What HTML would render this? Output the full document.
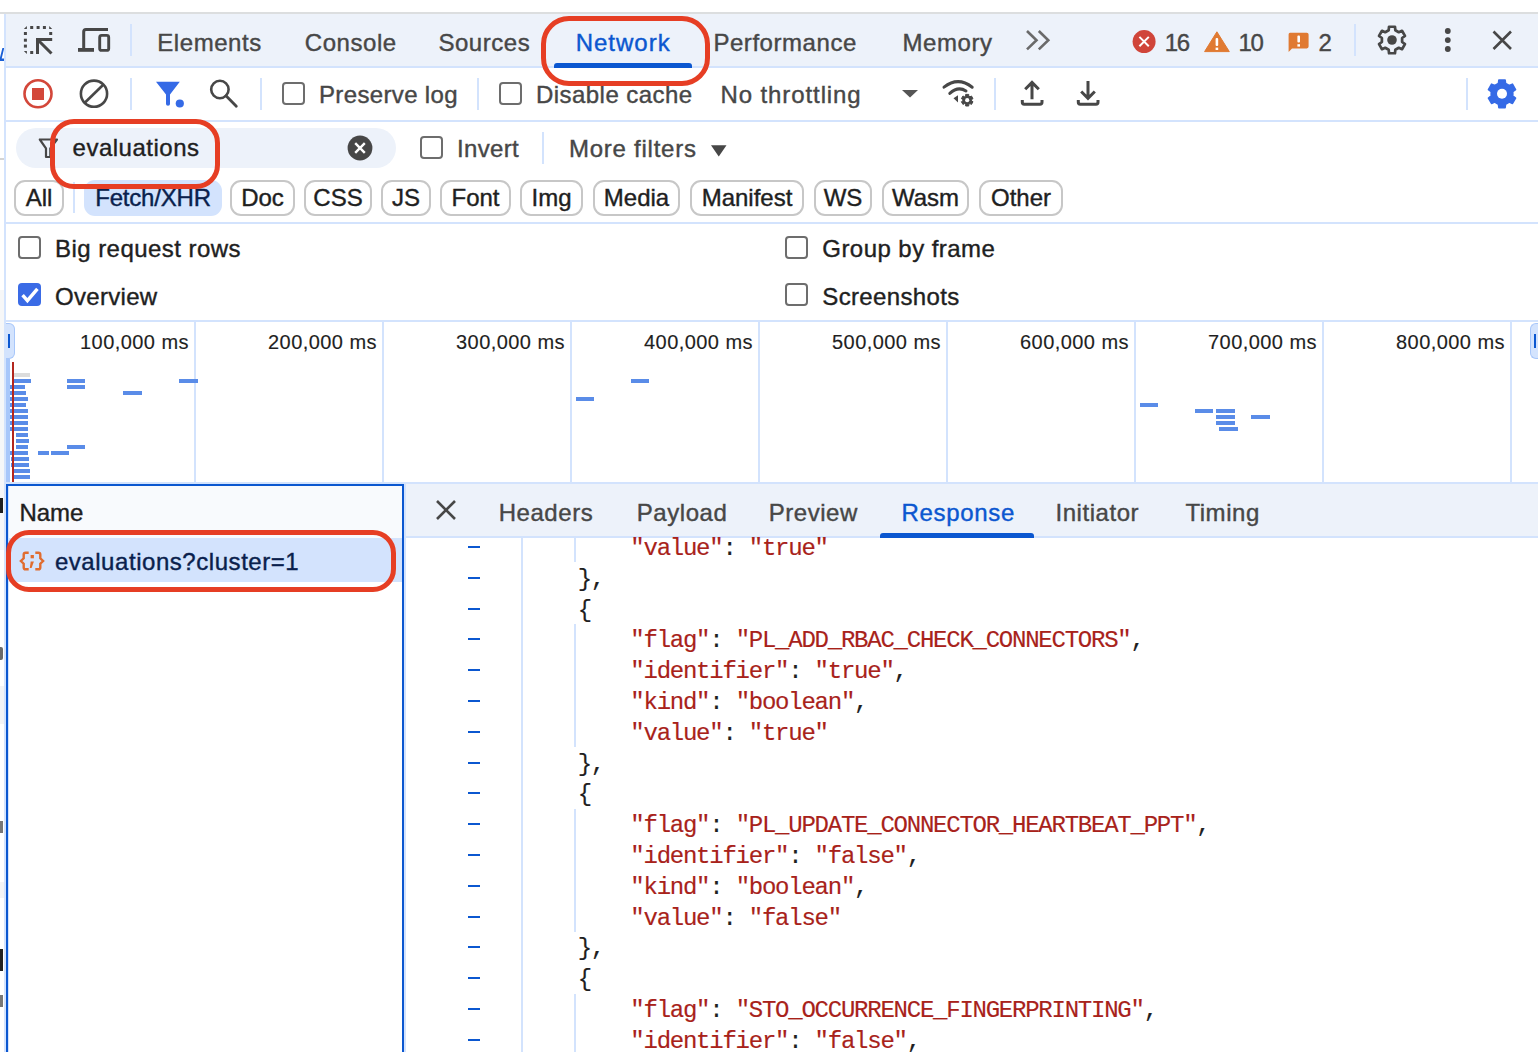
<!DOCTYPE html>
<html><head><meta charset="utf-8"><title>DevTools Network</title>
<style>
html,body{margin:0;padding:0;}
body{width:1538px;height:1052px;position:relative;overflow:hidden;background:#fff;font-family:"Liberation Sans",sans-serif;}
#root div, #root span, #root svg{position:absolute;box-sizing:content-box;}
.t{white-space:pre;-webkit-text-stroke:0.4px currentColor}
.chip{border:2px solid #c7c7c7;border-radius:11px;font-size:24px;line-height:32px;text-align:center;color:#1f1f1f;letter-spacing:0px;-webkit-text-stroke:0.4px currentColor}
.chip.sel{border:none;background:#d3e3fd;color:#0a1f4d;line-height:36px;border-radius:11px}
.code span{position:static !important}
.code{font-family:"Liberation Mono",monospace;font-size:24px;letter-spacing:-1.24px;line-height:30.8px;white-space:pre;color:#1f1f1f;-webkit-text-stroke:0.15px currentColor}
.code span{-webkit-text-stroke:0.15px currentColor}
</style></head><body><div id="root">
<div style="left:0px;top:0px;width:1538px;height:12px;background:#ffffff;"></div>
<div style="left:0px;top:12px;width:1538px;height:2px;background:#dcdedf;"></div>
<div style="left:4px;top:14px;width:2px;height:1038px;background:#d3e3fd;"></div>
<div style="left:6px;top:14px;width:1532px;height:52px;background:#edf2fa;"></div>
<div style="left:6px;top:66px;width:1532px;height:2px;background:#d3e3fd;"></div>
<span class="t" style="left:157.3px;top:31px;font-size:24px;line-height:24px;color:#474747;letter-spacing:0.55px;">Elements</span>
<span class="t" style="left:304.8px;top:31px;font-size:24px;line-height:24px;color:#474747;letter-spacing:0.55px;">Console</span>
<span class="t" style="left:438.4px;top:31px;font-size:24px;line-height:24px;color:#474747;letter-spacing:0.55px;">Sources</span>
<span class="t" style="left:713.4px;top:31px;font-size:24px;line-height:24px;color:#474747;letter-spacing:0.55px;">Performance</span>
<span class="t" style="left:902.5px;top:31px;font-size:24px;line-height:24px;color:#474747;letter-spacing:0.55px;">Memory</span>
<span class="t" style="left:575.7px;top:31px;font-size:24px;line-height:24px;color:#0b57d0;letter-spacing:1.0px;">Network</span>
<div style="left:554px;top:63px;width:138px;height:5px;background:#0b57d0;border-radius:3px 3px 0 0"></div>
<div style="left:130px;top:24px;width:2px;height:32px;background:#d3e3fd;"></div>
<div style="left:1354px;top:24px;width:2px;height:32px;background:#d3e3fd;"></div>
<span class="t" style="left:1164.8px;top:31px;font-size:24px;line-height:24px;color:#474747;letter-spacing:-1.5px;">16</span>
<span class="t" style="left:1238.6px;top:31px;font-size:24px;line-height:24px;color:#474747;letter-spacing:-1.5px;">10</span>
<span class="t" style="left:1318.6px;top:31px;font-size:24px;line-height:24px;color:#474747;letter-spacing:0px;">2</span>
<div style="left:6px;top:68px;width:1532px;height:52px;background:#ffffff;"></div>
<div style="left:6px;top:120px;width:1532px;height:2px;background:#d3e3fd;"></div>
<div style="left:130px;top:78px;width:2px;height:32px;background:#d3e3fd;"></div>
<div style="left:260px;top:78px;width:2px;height:32px;background:#d3e3fd;"></div>
<div style="left:477px;top:78px;width:2px;height:32px;background:#d3e3fd;"></div>
<div style="left:994px;top:78px;width:2px;height:32px;background:#d3e3fd;"></div>
<div style="left:1466px;top:78px;width:2px;height:32px;background:#d3e3fd;"></div>
<div style="left:282px;top:82px;width:19px;height:19px;border:2px solid #6d6d6d;border-radius:4px"></div>
<span class="t" style="left:319.0px;top:83px;font-size:24px;line-height:24px;color:#474747;letter-spacing:0.35px;">Preserve log</span>
<div style="left:499px;top:82px;width:19px;height:19px;border:2px solid #6d6d6d;border-radius:4px"></div>
<span class="t" style="left:536.0px;top:83px;font-size:24px;line-height:24px;color:#474747;letter-spacing:0.45px;">Disable cache</span>
<span class="t" style="left:720.5px;top:83px;font-size:24px;line-height:24px;color:#474747;letter-spacing:0.9px;">No throttling</span>
<div style="left:6px;top:122px;width:1532px;height:100px;background:#ffffff;"></div>
<div style="left:16px;top:128px;width:380px;height:40px;border-radius:20px;background:#edf2fa"></div>
<span class="t" style="left:72.6px;top:136px;font-size:24px;line-height:24px;color:#1f1f1f;letter-spacing:0.5px;">evaluations</span>
<div style="left:420px;top:136px;width:19px;height:19px;border:2px solid #6d6d6d;border-radius:4px"></div>
<span class="t" style="left:457.0px;top:137px;font-size:24px;line-height:24px;color:#474747;letter-spacing:0.35px;">Invert</span>
<div style="left:542px;top:132px;width:2px;height:32px;background:#d3e3fd;"></div>
<span class="t" style="left:569.0px;top:137px;font-size:24px;line-height:24px;color:#474747;letter-spacing:0.75px;">More filters</span>
<div style="left:73px;top:182px;width:2px;height:31px;background:#d3e3fd;"></div>
<div class="chip" style="left:14px;top:180px;width:46px;height:32px">All</div>
<div class="chip sel" style="left:84px;top:180px;width:138px;height:36px;letter-spacing:-0.2px">Fetch/XHR</div>
<div class="chip" style="left:230px;top:180px;width:61px;height:32px">Doc</div>
<div class="chip" style="left:304px;top:180px;width:64px;height:32px">CSS</div>
<div class="chip" style="left:381px;top:180px;width:46px;height:32px">JS</div>
<div class="chip" style="left:440px;top:180px;width:67px;height:32px">Font</div>
<div class="chip" style="left:520px;top:180px;width:59px;height:32px">Img</div>
<div class="chip" style="left:593px;top:180px;width:83px;height:32px">Media</div>
<div class="chip" style="left:690px;top:180px;width:110px;height:32px">Manifest</div>
<div class="chip" style="left:814px;top:180px;width:54px;height:32px">WS</div>
<div class="chip" style="left:882px;top:180px;width:83px;height:32px">Wasm</div>
<div class="chip" style="left:979px;top:180px;width:80px;height:32px">Other</div>
<div style="left:6px;top:222px;width:1532px;height:2px;background:#d3e3fd;"></div>
<div style="left:6px;top:224px;width:1532px;height:96px;background:#ffffff;"></div>
<div style="left:18px;top:236px;width:19px;height:19px;border:2px solid #6d6d6d;border-radius:4px"></div>
<span class="t" style="left:55.0px;top:237px;font-size:24px;line-height:24px;color:#1f1f1f;letter-spacing:0.45px;">Big request rows</span>
<div style="left:18px;top:283px;width:23px;height:23px;border-radius:4px;background:#3a6be6"></div>
<svg style="position:absolute;left:18px;top:283px" width="23" height="23" viewBox="0 0 23 23"><path d="M4.6 12.2 L9.4 17.6 L19.4 5.8" fill="none" stroke="#fff" stroke-width="3.4"/></svg>
<span class="t" style="left:55.0px;top:285px;font-size:24px;line-height:24px;color:#1f1f1f;letter-spacing:0.3px;">Overview</span>
<div style="left:785px;top:236px;width:19px;height:19px;border:2px solid #6d6d6d;border-radius:4px"></div>
<span class="t" style="left:822.3px;top:237px;font-size:24px;line-height:24px;color:#1f1f1f;letter-spacing:0.45px;">Group by frame</span>
<div style="left:785px;top:283px;width:19px;height:19px;border:2px solid #6d6d6d;border-radius:4px"></div>
<span class="t" style="left:822.3px;top:285px;font-size:24px;line-height:24px;color:#1f1f1f;letter-spacing:0.35px;">Screenshots</span>
<div style="left:6px;top:320px;width:1532px;height:2px;background:#d3e3fd;"></div>
<div style="left:6px;top:322px;width:1532px;height:160px;background:#ffffff;"></div>
<div style="left:194px;top:322px;width:2px;height:160px;background:#d3e3fd;"></div>
<span class="t" style="right:1349.0px;top:332px;font-size:20px;line-height:20px;color:#1f1f1f;letter-spacing:0.45px;-webkit-text-stroke:0.15px currentColor">100,000 ms</span>
<div style="left:382px;top:322px;width:2px;height:160px;background:#d3e3fd;"></div>
<span class="t" style="right:1161.0px;top:332px;font-size:20px;line-height:20px;color:#1f1f1f;letter-spacing:0.45px;-webkit-text-stroke:0.15px currentColor">200,000 ms</span>
<div style="left:570px;top:322px;width:2px;height:160px;background:#d3e3fd;"></div>
<span class="t" style="right:973.0px;top:332px;font-size:20px;line-height:20px;color:#1f1f1f;letter-spacing:0.45px;-webkit-text-stroke:0.15px currentColor">300,000 ms</span>
<div style="left:758px;top:322px;width:2px;height:160px;background:#d3e3fd;"></div>
<span class="t" style="right:785.0px;top:332px;font-size:20px;line-height:20px;color:#1f1f1f;letter-spacing:0.45px;-webkit-text-stroke:0.15px currentColor">400,000 ms</span>
<div style="left:946px;top:322px;width:2px;height:160px;background:#d3e3fd;"></div>
<span class="t" style="right:597.0px;top:332px;font-size:20px;line-height:20px;color:#1f1f1f;letter-spacing:0.45px;-webkit-text-stroke:0.15px currentColor">500,000 ms</span>
<div style="left:1134px;top:322px;width:2px;height:160px;background:#d3e3fd;"></div>
<span class="t" style="right:409.0px;top:332px;font-size:20px;line-height:20px;color:#1f1f1f;letter-spacing:0.45px;-webkit-text-stroke:0.15px currentColor">600,000 ms</span>
<div style="left:1322px;top:322px;width:2px;height:160px;background:#d3e3fd;"></div>
<span class="t" style="right:221.0px;top:332px;font-size:20px;line-height:20px;color:#1f1f1f;letter-spacing:0.45px;-webkit-text-stroke:0.15px currentColor">700,000 ms</span>
<div style="left:1510px;top:322px;width:2px;height:160px;background:#d3e3fd;"></div>
<span class="t" style="right:33.0px;top:332px;font-size:20px;line-height:20px;color:#1f1f1f;letter-spacing:0.45px;-webkit-text-stroke:0.15px currentColor">800,000 ms</span>
<div style="left:6px;top:482px;width:1532px;height:2px;background:#d3e3fd;"></div>
<div style="left:14.0px;top:379px;width:16.8px;height:4px;background:#5a8ce8"></div>
<div style="left:10.3px;top:385px;width:15.0px;height:4px;background:#5a8ce8"></div>
<div style="left:10.0px;top:391px;width:15.5px;height:4px;background:#5a8ce8"></div>
<div style="left:10.0px;top:397px;width:18.4px;height:4px;background:#5a8ce8"></div>
<div style="left:10.0px;top:403px;width:15.6px;height:4px;background:#5a8ce8"></div>
<div style="left:10.0px;top:409px;width:17.6px;height:4px;background:#5a8ce8"></div>
<div style="left:10.0px;top:415px;width:17.8px;height:4px;background:#5a8ce8"></div>
<div style="left:10.0px;top:421px;width:17.8px;height:4px;background:#5a8ce8"></div>
<div style="left:10.0px;top:427px;width:18.0px;height:4px;background:#5a8ce8"></div>
<div style="left:16.0px;top:433px;width:12.0px;height:4px;background:#5a8ce8"></div>
<div style="left:16.0px;top:439px;width:12.6px;height:4px;background:#5a8ce8"></div>
<div style="left:16.0px;top:445px;width:12.2px;height:4px;background:#5a8ce8"></div>
<div style="left:10.0px;top:451px;width:18.2px;height:4px;background:#5a8ce8"></div>
<div style="left:11.0px;top:457px;width:17.5px;height:4px;background:#5a8ce8"></div>
<div style="left:11.0px;top:463px;width:18.0px;height:4px;background:#5a8ce8"></div>
<div style="left:14.0px;top:469px;width:16.0px;height:4px;background:#5a8ce8"></div>
<div style="left:14.0px;top:475px;width:16.0px;height:4px;background:#5a8ce8"></div>
<div style="left:66.9px;top:379px;width:18.1px;height:4px;background:#5a8ce8"></div>
<div style="left:66.9px;top:385px;width:18.1px;height:4px;background:#5a8ce8"></div>
<div style="left:179.0px;top:379px;width:18.6px;height:4px;background:#5a8ce8"></div>
<div style="left:123.3px;top:391px;width:18.3px;height:4px;background:#5a8ce8"></div>
<div style="left:66.9px;top:445px;width:18.1px;height:4px;background:#5a8ce8"></div>
<div style="left:38.0px;top:451px;width:11.0px;height:4px;background:#5a8ce8"></div>
<div style="left:51.0px;top:451px;width:18.0px;height:4px;background:#5a8ce8"></div>
<div style="left:575.6px;top:397px;width:18.2px;height:4px;background:#5a8ce8"></div>
<div style="left:631.0px;top:379px;width:18.2px;height:4px;background:#5a8ce8"></div>
<div style="left:1139.9px;top:403px;width:18.5px;height:4px;background:#5a8ce8"></div>
<div style="left:1194.8px;top:409px;width:18.6px;height:4px;background:#5a8ce8"></div>
<div style="left:1216.2px;top:409px;width:18.8px;height:4px;background:#5a8ce8"></div>
<div style="left:1216.2px;top:415px;width:18.8px;height:4px;background:#5a8ce8"></div>
<div style="left:1216.2px;top:421px;width:18.8px;height:4px;background:#5a8ce8"></div>
<div style="left:1219.0px;top:427px;width:19.4px;height:4px;background:#5a8ce8"></div>
<div style="left:1251.2px;top:415px;width:18.8px;height:4px;background:#5a8ce8"></div>
<div style="left:14px;top:373px;width:16px;height:4px;background:#dcdcdc;"></div>
<div style="left:6px;top:359px;width:4px;height:123px;background:#a8c7fa;"></div>
<div style="left:6px;top:323px;width:8px;height:34px;background:#d3e3fd;border:1px solid #a8c7fa;border-left:none;border-radius:0 6px 6px 0"></div>
<div style="left:8px;top:334px;width:2px;height:14px;background:#0b57d0;"></div>
<div style="left:12px;top:362px;width:2px;height:120px;background:#b3261e;"></div>
<div style="left:1530px;top:323px;width:9px;height:34px;background:#d3e3fd;border:1px solid #a8c7fa;border-right:none;border-radius:6px 0 0 6px"></div>
<div style="left:1534px;top:334px;width:2px;height:14px;background:#0b57d0;"></div>
<div style="left:6px;top:484px;width:394px;height:570px;border:2px solid #0b57d0;background:#fff"></div>
<div style="left:8px;top:486px;width:394px;height:52px;background:#f8fafd;"></div>
<div style="left:8px;top:486px;width:1px;height:566px;background:#d3e3fd;"></div>
<span class="t" style="left:19.4px;top:501px;font-size:24px;line-height:24px;color:#1f1f1f;letter-spacing:0px;">Name</span>
<div style="left:8px;top:538px;width:394px;height:44px;background:#d3e3fd;"></div>
<span class="t" style="left:54.9px;top:550px;font-size:24px;line-height:24px;color:#0a1f4d;letter-spacing:0.55px;">evaluations?cluster=1</span>
<div style="left:404px;top:482px;width:2px;height:570px;background:#d3e3fd;"></div>
<div style="left:406px;top:484px;width:1132px;height:52px;background:#edf2fa;"></div>
<div style="left:406px;top:482px;width:1132px;height:2px;background:#d3e3fd;"></div>
<div style="left:406px;top:536px;width:1132px;height:2px;background:#d3e3fd;"></div>
<span class="t" style="left:498.7px;top:501px;font-size:24px;line-height:24px;color:#474747;letter-spacing:0.55px;">Headers</span>
<span class="t" style="left:636.8px;top:501px;font-size:24px;line-height:24px;color:#474747;letter-spacing:0.55px;">Payload</span>
<span class="t" style="left:768.7px;top:501px;font-size:24px;line-height:24px;color:#474747;letter-spacing:0.55px;">Preview</span>
<span class="t" style="left:1055.5px;top:501px;font-size:24px;line-height:24px;color:#474747;letter-spacing:0.55px;">Initiator</span>
<span class="t" style="left:1185.4px;top:501px;font-size:24px;line-height:24px;color:#474747;letter-spacing:0.55px;">Timing</span>
<span class="t" style="left:901.4px;top:501px;font-size:24px;line-height:24px;color:#0b57d0;letter-spacing:0.7px;">Response</span>
<div style="left:880px;top:533px;width:154px;height:5px;background:#0b57d0;border-radius:3px 3px 0 0"></div>
<div style="left:406px;top:538px;width:1132px;height:514px;background:#ffffff;"></div>
<div style="left:521px;top:538px;width:2px;height:514px;background:#d3e3fd;"></div>
<div class="code" style="left:525px;top:534px">        <span style="color:#a8221a">"value"</span>: <span style="color:#a8221a">"true"</span>
    },
    {
        <span style="color:#a8221a">"flag"</span>: <span style="color:#a8221a">"PL_ADD_RBAC_CHECK_CONNECTORS"</span>,
        <span style="color:#a8221a">"identifier"</span>: <span style="color:#a8221a">"true"</span>,
        <span style="color:#a8221a">"kind"</span>: <span style="color:#a8221a">"boolean"</span>,
        <span style="color:#a8221a">"value"</span>: <span style="color:#a8221a">"true"</span>
    },
    {
        <span style="color:#a8221a">"flag"</span>: <span style="color:#a8221a">"PL_UPDATE_CONNECTOR_HEARTBEAT_PPT"</span>,
        <span style="color:#a8221a">"identifier"</span>: <span style="color:#a8221a">"false"</span>,
        <span style="color:#a8221a">"kind"</span>: <span style="color:#a8221a">"boolean"</span>,
        <span style="color:#a8221a">"value"</span>: <span style="color:#a8221a">"false"</span>
    },
    {
        <span style="color:#a8221a">"flag"</span>: <span style="color:#a8221a">"STO_OCCURRENCE_FINGERPRINTING"</span>,
        <span style="color:#a8221a">"identifier"</span>: <span style="color:#a8221a">"false"</span>,</div>
<div style="left:467.5px;top:546px;width:12px;height:2px;background:#0b57d0"></div>
<div style="left:467.5px;top:577px;width:12px;height:2px;background:#0b57d0"></div>
<div style="left:467.5px;top:608px;width:12px;height:2px;background:#0b57d0"></div>
<div style="left:467.5px;top:638px;width:12px;height:2px;background:#0b57d0"></div>
<div style="left:467.5px;top:669px;width:12px;height:2px;background:#0b57d0"></div>
<div style="left:467.5px;top:700px;width:12px;height:2px;background:#0b57d0"></div>
<div style="left:467.5px;top:731px;width:12px;height:2px;background:#0b57d0"></div>
<div style="left:467.5px;top:762px;width:12px;height:2px;background:#0b57d0"></div>
<div style="left:467.5px;top:792px;width:12px;height:2px;background:#0b57d0"></div>
<div style="left:467.5px;top:823px;width:12px;height:2px;background:#0b57d0"></div>
<div style="left:467.5px;top:854px;width:12px;height:2px;background:#0b57d0"></div>
<div style="left:467.5px;top:885px;width:12px;height:2px;background:#0b57d0"></div>
<div style="left:467.5px;top:916px;width:12px;height:2px;background:#0b57d0"></div>
<div style="left:467.5px;top:946px;width:12px;height:2px;background:#0b57d0"></div>
<div style="left:467.5px;top:977px;width:12px;height:2px;background:#0b57d0"></div>
<div style="left:467.5px;top:1008px;width:12px;height:2px;background:#0b57d0"></div>
<div style="left:467.5px;top:1039px;width:12px;height:2px;background:#0b57d0"></div>
<div style="left:574px;top:538.0px;width:2px;height:24.4px;background:#d3e3fd"></div>
<div style="left:574px;top:624.0px;width:2px;height:123.2px;background:#d3e3fd"></div>
<div style="left:574px;top:808.8px;width:2px;height:123.2px;background:#d3e3fd"></div>
<div style="left:574px;top:993.6px;width:2px;height:61.6px;background:#d3e3fd"></div>
<svg style="left:0;top:0" width="6" height="70" viewBox="0 0 6 70"><polygon points="2.4,47.9 4,47.9 4,49 1.7,58.6 4,58.6 4,60.9 0,60.9 0,57.5" fill="#1a5fd6"/></svg>
<div style="left:0;top:158px;width:4px;height:1.5px;background:#d4d4d4"></div>
<div style="left:0;top:290px;width:4px;height:190px;background:#f6f7f8"></div>
<div style="left:0;top:480px;width:4px;height:70px;background:#f6f7f9"></div>
<div style="left:0;top:497.5px;width:3px;height:15px;background:#1f1f1f"></div>
<div style="left:0;top:647px;width:3px;height:13px;background:#6a6a6a;border-radius:0 2px 2px 0"></div>
<div style="left:0;top:686px;width:4px;height:38px;background:#f3f4f6"></div>
<div style="left:0;top:821px;width:3px;height:12px;background:#777"></div>
<div style="left:0;top:882px;width:4px;height:16px;background:#f3f4f6"></div>
<div style="left:0;top:949px;width:3px;height:22px;background:#222"></div>
<div style="left:0;top:995px;width:3px;height:12px;background:#777"></div>

<svg style="left:0;top:0;overflow:visible" width="1538" height="1052" viewBox="0 0 1538 1052"><rect x="30.2" y="26" width="3" height="3" fill="#474747"/><rect x="36.6" y="26" width="3" height="3" fill="#474747"/><rect x="42.9" y="26" width="3" height="3" fill="#474747"/><rect x="23.9" y="32" width="3" height="3" fill="#474747"/><rect x="23.9" y="38.7" width="3" height="3" fill="#474747"/><rect x="23.9" y="44.6" width="3" height="3" fill="#474747"/><rect x="49.2" y="32" width="3" height="3" fill="#474747"/><rect x="30.2" y="51" width="3" height="3" fill="#474747"/><polygon points="23.9,29 26.9,26 26.9,29" fill="#474747"/><polygon points="49.2,26 52.2,29 49.2,29" fill="#474747"/><polygon points="23.9,51 26.9,51 26.9,54" fill="#474747"/><path d="M37.5 54 V39.5 H52.2 M38.5 40.5 L51.5 53.5" fill="none" stroke="#474747" stroke-width="3"/><path d="M108 29.4 H86 Q83.7 29.4 83.7 31.7 V49.9" fill="none" stroke="#474747" stroke-width="3"/><rect x="78" y="48" width="16" height="3.8" fill="#474747"/><rect x="99.7" y="35.4" width="9" height="15" rx="2" fill="none" stroke="#474747" stroke-width="2.9"/><path d="M1027 31 L1036.5 40.2 L1027 49.4 M1038.8 31 L1048.3 40.2 L1038.8 49.4" fill="none" stroke="#6a6a6a" stroke-width="2.6"/><circle cx="1144.1" cy="41.6" r="11.5" fill="#d0453a"/><path d="M1139.4 36.9 L1148.8 46.3 M1148.8 36.9 L1139.4 46.3" stroke="#fff" stroke-width="2"/><path d="M1216.9 31.8 L1229.3 51.6 L1204.6 51.6 Z" fill="#e07a32" stroke="#e07a32" stroke-width="1" stroke-linejoin="round"/><rect x="1215.6" y="38" width="2.6" height="8" rx="1" fill="#fff"/><rect x="1215.6" y="47.6" width="2.6" height="2.4" fill="#fff"/><path d="M1290 32.8 H1306.8 Q1308.6 32.8 1308.6 34.6 V46.6 Q1308.6 48.4 1306.8 48.4 H1292 L1288.6 52 V34.4 Q1288.6 32.8 1290 32.8 Z" fill="#e07a32"/><rect x="1297.4" y="35.5" width="2.6" height="7" rx="1" fill="#fff"/><rect x="1297.4" y="44.2" width="2.6" height="2.4" fill="#fff"/><path d="M1389.03 26.73 L1394.97 26.73 L1395.33 30.25 L1398.78 32.24 L1402.01 30.79 L1404.98 35.93 L1402.11 38.01 L1402.11 41.99 L1404.98 44.07 L1402.01 49.21 L1398.78 47.76 L1395.33 49.75 L1394.97 53.27 L1389.03 53.27 L1388.67 49.75 L1385.22 47.76 L1381.99 49.21 L1379.02 44.07 L1381.89 41.99 L1381.89 38.01 L1379.02 35.93 L1381.99 30.79 L1385.22 32.24 L1388.67 30.25 Z" fill="none" stroke="#474747" stroke-width="2.7" stroke-linejoin="round"/><circle cx="1392" cy="40" r="4.8" fill="#474747"/><circle cx="1447.8" cy="31" r="2.9" fill="#474747"/><circle cx="1447.8" cy="40.1" r="2.9" fill="#474747"/><circle cx="1447.8" cy="49" r="2.9" fill="#474747"/><path d="M1493.5 31.5 L1511 49 M1511 31.5 L1493.5 49" stroke="#474747" stroke-width="2.6"/><circle cx="38" cy="93.8" r="13.5" fill="none" stroke="#d3473a" stroke-width="2.6"/><rect x="32" y="88" width="12" height="12" fill="#d3473a"/><circle cx="94" cy="93.7" r="13.1" fill="none" stroke="#474747" stroke-width="2.6"/><path d="M103.5 84.5 L84.5 103" stroke="#474747" stroke-width="2.6"/><path d="M156 81.7 H179.8 L170 94.5 V104 Q170 105.7 168 105.7 Q166 105.7 166 104 V94.5 Z" fill="#356ae6"/><circle cx="179.8" cy="103.5" r="4.1" fill="#356ae6"/><circle cx="219.9" cy="89.5" r="8.7" fill="none" stroke="#474747" stroke-width="2.6"/><path d="M226 95.8 L236.3 106.2" stroke="#474747" stroke-width="2.8" stroke-linecap="round"/><polygon points="902,90 918,90 910,97.6" fill="#555"/><path d="M944 87.2 Q958 76 972.2 87.2" fill="none" stroke="#474747" stroke-width="3" stroke-linecap="round"/><path d="M949.8 93.4 Q958 85.8 966 91" fill="none" stroke="#474747" stroke-width="3" stroke-linecap="round"/><polygon points="953.5,98.3 958,95.2 958,102.5" fill="#474747"/><path d="M965.65 94.40 L968.75 94.40 L968.73 96.08 L970.00 96.81 L971.44 95.96 L973.00 98.65 L971.54 99.47 L971.54 100.93 L973.00 101.75 L971.44 104.44 L970.00 103.59 L968.73 104.32 L968.75 106.00 L965.65 106.00 L965.67 104.32 L964.40 103.59 L962.96 104.44 L961.40 101.75 L962.86 100.93 L962.86 99.47 L961.40 98.65 L962.96 95.96 L964.40 96.81 L965.67 96.08 Z" fill="#474747" stroke="#474747" stroke-width="1" stroke-linejoin="round"/><circle cx="967.2" cy="100.2" r="2.1" fill="#fff"/><path d="M1032 83 V99.3 M1025.2 89.2 L1032 82.4 L1038.8 89.2" fill="none" stroke="#474747" stroke-width="3"/><path d="M1022.3 100 V102.3 Q1022.3 104.2 1024.2 104.2 H1040 Q1042 104.2 1042 102.3 V100" fill="none" stroke="#474747" stroke-width="3"/><path d="M1088 81 V97.8 M1081.2 91.5 L1088 98.3 L1094.8 91.5" fill="none" stroke="#474747" stroke-width="3"/><path d="M1078.3 100 V102.3 Q1078.3 104.2 1080.2 104.2 H1096 Q1098 104.2 1098 102.3 V100" fill="none" stroke="#474747" stroke-width="3"/><path d="M1498.90 79.94 L1505.10 79.94 L1505.56 83.39 L1509.24 85.52 L1512.45 84.19 L1515.55 89.55 L1512.79 91.68 L1512.79 95.92 L1515.55 98.05 L1512.45 103.41 L1509.24 102.08 L1505.56 104.21 L1505.10 107.66 L1498.90 107.66 L1498.44 104.21 L1494.76 102.08 L1491.55 103.41 L1488.45 98.05 L1491.21 95.92 L1491.21 91.68 L1488.45 89.55 L1491.55 84.19 L1494.76 85.52 L1498.44 83.39 Z" fill="#356ae6" stroke="#356ae6" stroke-width="1.6" stroke-linejoin="round"/><circle cx="1502" cy="93.8" r="5" fill="#fff"/><path d="M39.8 139.5 H57 L50.3 148.3 V157 H46 V148.3 Z" fill="none" stroke="#474747" stroke-width="2.2" stroke-linejoin="round"/><circle cx="360" cy="148" r="12.4" fill="#474747"/><path d="M355.2 143.2 L364.8 152.8 M364.8 143.2 L355.2 152.8" stroke="#fff" stroke-width="2.4"/><polygon points="711,145.3 726.5,145.3 718.75,156.5" fill="#474747"/><path d="M28.7 552.7 H25.6 Q23.7 552.7 23.7 554.6 V558.3 L20.9 561 L23.7 563.7 V567.4 Q23.7 569.3 25.6 569.3 H28.7" fill="none" stroke="#e06c2f" stroke-width="2.4"/><path d="M35.3 552.7 H38.4 Q40.3 552.7 40.3 554.6 V558.3 L43.1 561 L40.3 563.7 V567.4 Q40.3 569.3 38.4 569.3 H35.3" fill="none" stroke="#e06c2f" stroke-width="2.4"/><rect x="30.6" y="555" width="3.3" height="3.3" fill="#e06c2f"/><path d="M30.7 561.5 H33.9 L31.6 568 H29.8 Z" fill="#e06c2f"/><path d="M437 501 L455 519 M455 501 L437 519" stroke="#474747" stroke-width="2.6"/></svg>
<div style="left:540.5px;top:15.6px;width:159.9px;height:60.4px;border:5.2px solid #e63e24;border-radius:28px"></div>
<div style="left:50.2px;top:118.8px;width:159.7px;height:59.8px;border:5.2px solid #e63e24;border-radius:24px"></div>
<div style="left:5.5px;top:530px;width:380px;height:51.6px;border:5.2px solid #e63e24;border-radius:23px"></div>

</div></body></html>
